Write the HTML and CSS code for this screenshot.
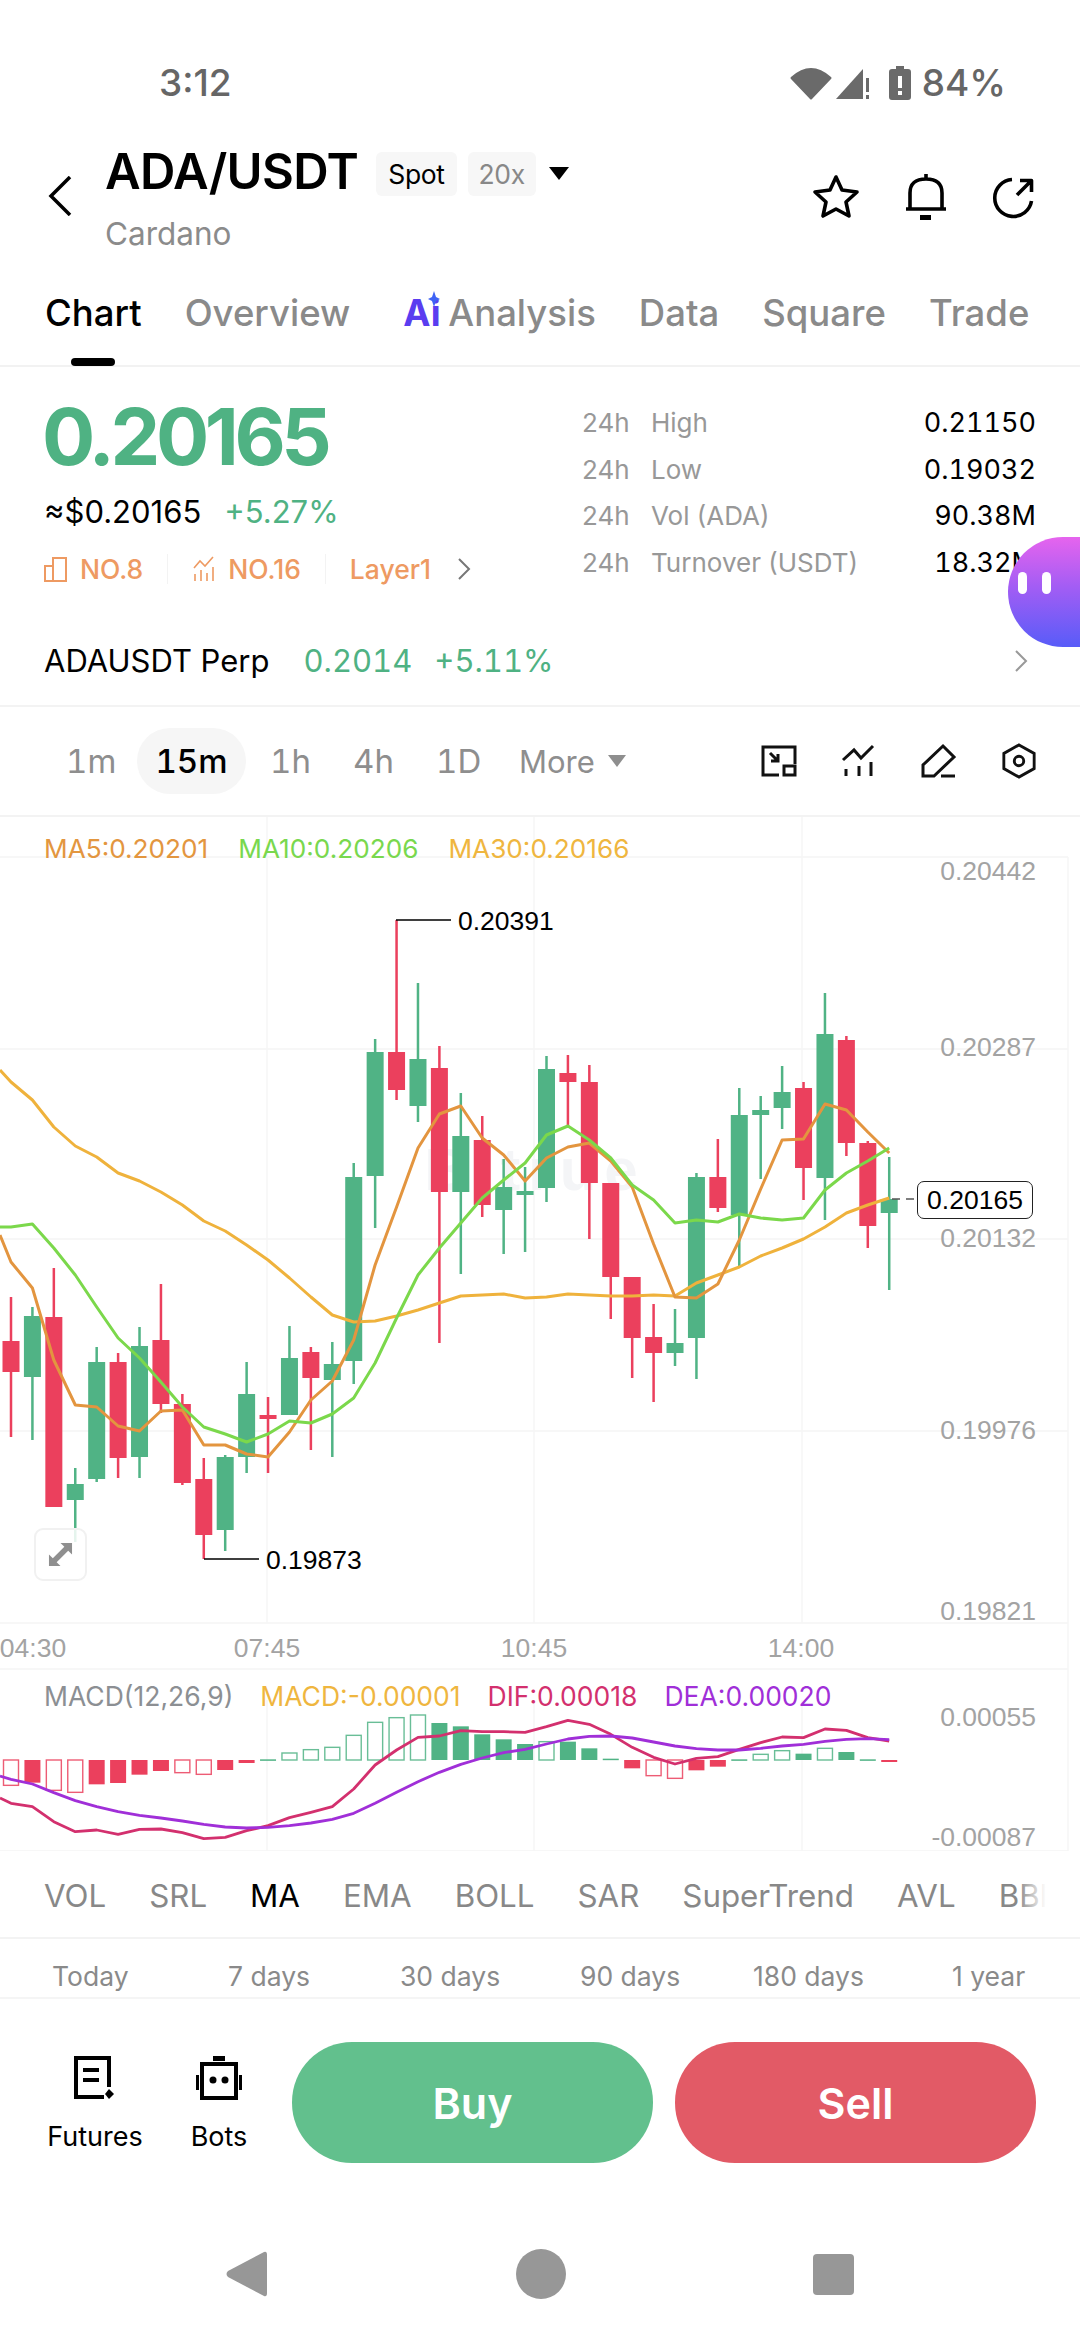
FILE: index.html
```html
<!DOCTYPE html>
<html>
<head>
    <meta charset="utf-8">
    <meta name="viewport" content="width=device-width, initial-scale=1">
    <title>ADA/USDT</title>
    <link rel="stylesheet" href="styles.css">
</head>
<body>
    <div class="status">
        <span class="clock">3:12</span>
        <div class="status-right">
            <svg class="ic-wifi" viewBox="0 0 42 34"><path d="M1 11Q21-7 41 11Q42 12 41 13L22 33Q21 34 20 33L1 13Q0 12 1 11Z"/></svg>
            <svg class="ic-signal" viewBox="0 0 34 34"><path d="M0 33L27 3V33Z"/><path d="M30 12h3v14h-3zM30 29h3v4h-3z"/></svg>
            <svg class="ic-battery" viewBox="0 0 22 34"><path d="M7 0h8v3h4q3 0 3 3v25q0 3-3 3H3q-3 0-3-3V6q0-3 3-3h4Z"/><path class="cut" d="M9 10h4v12H9zM9 25h4v4H9z"/></svg>
            <span class="percent">84%</span>
        </div>
    </div>

    <div class="header">
        <svg class="back" viewBox="0 0 24 40"><path d="M22 1L3 20L22 39"/></svg>
        <div class="title">
            <div class="title-top">
                <h1>ADA/USDT</h1>
                <span class="badge">Spot</span>
                <span class="badge muted">20x</span>
                <span class="caret"></span>
            </div>
            <p class="coin-name">Cardano</p>
        </div>
        <div class="header-icons">
            <svg class="star" viewBox="0 0 48 48"><path d="M24 4L30 17L45 19L34 29L37 43L24 36L11 43L14 29L3 19L18 17Z"/></svg>
            <svg viewBox="0 0 42 48"><path d="M5 36V20Q5 6 21 6Q37 6 37 20V36M1 36H41M21 1V6"/><path class="solid" d="M15 42h11v5H15z"/></svg>
            <svg viewBox="0 0 42 48"><path d="M20 6.5A18.5 18.5 0 1 0 39.5 28M25 22L39.5 7.5M28 7.5H39.5V19"/></svg>
        </div>
    </div>

    <div class="tabs">
        <span class="on">Chart</span>
        <span>Overview</span>
        <span class="ai-tab"><b class="ai">Ai<svg viewBox="0 0 12 16"><path d="M6 0L8 6L12 8L8 10L6 16L4 10L0 8L4 6Z"/></svg></b>Analysis</span>
        <span>Data</span>
        <span>Square</span>
        <span>Trade</span>
        <i class="tab-bar"></i>
    </div>

    <div class="summary">
        <div class="price-col">
            <div class="price">0.20165</div>
            <div class="price-sub"><span>≈$0.20165</span><span class="up">+5.27%</span></div>
            <div class="ranks">
                <svg viewBox="0 0 24 26"><path d="M1 10h8v15H1zM9 2h13v23H9z"/></svg>
                <span class="rank-a">NO.8</span>
                <i class="rank-sep"></i>
                <svg class="small" viewBox="0 0 24 26"><path d="M2 12L8 5L13 10L21 1M3 25V18M9 25V14M15 25V17M21 25V11"/></svg>
                <span class="rank-b">NO.16</span>
                <i class="rank-sep"></i>
                <span class="rank-c">Layer1</span>
                <svg class="chev" viewBox="0 0 14 24"><path d="M2 2L12 12L2 22"/></svg>
            </div>
        </div>
        <div class="stats">
            <div class="stat"><span class="h">24h</span><span class="k">High</span><span class="v">0.21150</span></div>
            <div class="stat"><span class="h">24h</span><span class="k">Low</span><span class="v">0.19032</span></div>
            <div class="stat"><span class="h">24h</span><span class="k">Vol (ADA)</span><span class="v">90.38M</span></div>
            <div class="stat"><span class="h">24h</span><span class="k">Turnover (USDT)</span><span class="v">18.32M</span></div>
        </div>
        <div class="bubble"><i></i><i></i></div>
    </div>

    <div class="perp">
        <span class="perp-name">ADAUSDT Perp</span>
        <span class="up perp-price">0.2014</span>
        <span class="up perp-pct">+5.11%</span>
        <svg class="perp-chev" viewBox="0 0 14 24"><path d="M2 2L12 12L2 22"/></svg>
    </div>

    <div class="frames">
        <span class="f1">1m</span>
        <span class="f15">15m</span>
        <span class="f2 first">1h</span>
        <span class="f2">4h</span>
        <span class="f2">1D</span>
        <span class="more">More<i></i></span>
        <div class="tools">
            <svg viewBox="0 -2 36 36"><path d="M18 30H2V2H34V19M9 8L17 16M17 9V16H10"/><path d="M23 21H34V30H23Z"/></svg>
            <svg viewBox="-2 -2 36 36"><path d="M0 15L11 5L18 13L30 1M3 24V31M16 21V31M28 17V31"/></svg>
            <svg viewBox="-1 -2 36 36"><path d="M21 1L32 12L12 31H1V20ZM19 31H33"/></svg>
            <svg viewBox="0 0 36 38"><path d="M18 2L34 11V27L18 36L2 27V11Z"/><circle cx="18" cy="19" r="5"/></svg>
        </div>
    </div>

    <div class="chart">
        <svg id="plot" viewBox="0 817 1080 1034">
            <g class="grid">
                <path d="M0 857H1068M0 1049H1068M0 1239H1068M0 1431H1068M0 1623H1068M0 1669H1068M0 1851H1068"/>
                <path d="M267 817V1623M534 817V1623M802 817V1623M1068 857V1851M267 1700V1851M534 1700V1851M802 1700V1851"/>
            </g>
            <text class="wm" x="535" y="1190" text-anchor="middle">Bitrue</text>
            <g id="macd"></g>
            <g id="candles"></g>
            <g id="lines"></g>
            <path class="note" d="M396 920H451M204 1559H259"/>
            <path class="dash" d="M892 1199H917"/>
            <text class="note-t" x="458" y="930">0.20391</text>
            <text class="note-t" x="266" y="1569">0.19873</text>
            <g class="axis">
                <text x="1036" y="880">0.20442</text>
                <text x="1036" y="1056">0.20287</text>
                <text x="1036" y="1247">0.20132</text>
                <text x="1036" y="1439">0.19976</text>
                <text x="1036" y="1620">0.19821</text>
                <text x="1036" y="1726">0.00055</text>
                <text x="1036" y="1846">-0.00087</text>
            </g>
            <g class="times">
                <text x="33" y="1657">04:30</text>
                <text x="267" y="1657">07:45</text>
                <text x="534" y="1657">10:45</text>
                <text x="801" y="1657">14:00</text>
            </g>
        </svg>
        <div class="legend">
            <span class="c-ma5">MA5:0.20201</span>
            <span class="c-ma10">MA10:0.20206</span>
            <span class="c-ma30">MA30:0.20166</span>
        </div>
        <div class="now">0.20165</div>
        <div class="expand">
            <svg viewBox="0 0 26 26"><path d="M1 25V13L5 17L17 5L13 1H25V13L21 9L9 21L13 25Z"/></svg>
        </div>
        <div class="legend macd-legend">
            <span class="c-gray">MACD(12,26,9)</span>
            <span class="c-ma30">MACD:-0.00001</span>
            <span class="c-dif">DIF:0.00018</span>
            <span class="c-dea">DEA:0.00020</span>
        </div>
    </div>

    <div class="indicators">
        <span>VOL</span><span>SRL</span><span class="on">MA</span><span>EMA</span><span>BOLL</span><span>SAR</span><span>SuperTrend</span><span>AVL</span><span>BBI</span>
    </div>

    <div class="ranges">
        <span>Today</span><span>7 days</span><span>30 days</span><span>90 days</span><span>180 days</span><span>1 year</span>
    </div>

    <div class="actions">
        <div class="action">
            <svg viewBox="0 0 44 44"><path class="ln" d="M36 31V2H3V41H31M10 14H26M10 24H26"/><path class="solid" d="M36 33L41 38L36 43L32 38Z"/></svg>
            <span>Futures</span>
        </div>
        <div class="action bots">
            <svg viewBox="0 0 46 44"><path class="ln" d="M6 8H40V42H6Z"/><path class="solid" d="M17 0H29V5H17ZM0 19H3V34H0ZM43 19H46V34H43Z"/><circle class="solid" cx="17" cy="24" r="3.5"/><circle class="solid" cx="29" cy="24" r="3.5"/></svg>
            <span>Bots</span>
        </div>
        <button class="trade buy">Buy</button>
        <button class="trade sell">Sell</button>
    </div>

    <div class="nav">
        <svg class="nav-back" viewBox="0 0 42 46"><path d="M38 1Q41 0 41 4V42Q41 46 38 45L2 26Q-1 23 2 20Z"/></svg>
        <i class="nav-home"></i>
        <i class="nav-square"></i>
    </div>

    <script src="chart.js"></script>
</body>
</html>
```

FILE: styles.css
```css
* {
    margin: 0;
    padding: 0;
    box-sizing: border-box;
    font-family: 'Inter', 'Liberation Sans', sans-serif;
}
body {
    width: 1080px;
    height: 2340px;
    background: #fff;
    color: #000;
    overflow: hidden;
    position: relative;
}
svg {
    display: block;
    flex: none;
}
i {
    display: block;
    font-style: normal;
}

/* status bar */
.status {
    height: 130px;
    padding: 60px 74px 0 159px;
    display: flex;
    justify-content: space-between;
    align-items: flex-start;
    color: #666;
    font-family: 'Roboto', sans-serif;
    font-size: 37px;
    font-weight: 500;
    line-height: 46px;
}
.status-right {
    display: flex;
    align-items: center;
    height: 46px;
}
.status-right svg {
    fill: #6a6a6a;
}
.ic-wifi {
    width: 42px;
    height: 34px;
}
.ic-signal {
    width: 34px;
    height: 34px;
    margin-left: 4px;
}
.ic-battery {
    width: 22px;
    height: 34px;
    margin-left: 19px;
}
.ic-battery .cut {
    fill: #fff;
}
.percent {
    margin-left: 11px;
}

/* title */
.header {
    height: 140px;
    display: flex;
    align-items: flex-start;
    padding-left: 48px;
    position: relative;
}
.back {
    width: 24px;
    height: 40px;
    margin-top: 46px;
    fill: none;
    stroke: #000;
    stroke-width: 3.5;
}
.title {
    margin-left: 33px;
}
.title-top {
    display: flex;
    align-items: flex-start;
    height: 68px;
}
.title h1 {
    font-size: 49px;
    font-weight: 600;
    line-height: 84px;
    letter-spacing: -0.6px;
}
.badge {
    height: 44px;
    margin: 22px 0 0 18px;
    padding: 0 12px;
    background: #f7f7f7;
    border-radius: 6px;
    font-size: 26.5px;
    line-height: 44px;
    letter-spacing: -0.4px;
}
.badge.muted {
    margin-left: 11px;
    padding: 0 11px;
    color: #888;
}
.caret {
    width: 0;
    height: 0;
    margin: 37px 0 0 13px;
    border-left: 10px solid transparent;
    border-right: 10px solid transparent;
    border-top: 13px solid #000;
}
.coin-name {
    margin-top: 18px;
    font-size: 31.5px;
    line-height: 36px;
    color: #8b8b8b;
}
.header-icons {
    position: absolute;
    right: 46px;
    top: 43px;
    display: flex;
    gap: 45px;
}
.header-icons svg {
    width: 42px;
    height: 48px;
    fill: none;
    stroke: #000;
    stroke-width: 3.6;
    stroke-linejoin: round;
}
.header-icons .star {
    width: 48px;
}
.header-icons .solid {
    fill: #000;
    stroke: none;
}

/* tabs */
.tabs {
    height: 97px;
    padding: 20px 0 0 45px;
    display: flex;
    gap: 43px;
    position: relative;
    border-bottom: 2px solid #f2f2f2;
    font-size: 36.5px;
    font-weight: 500;
    line-height: 46px;
    color: #8a8a8a;
}
.tabs .on {
    color: #000;
}
.ai-tab {
    display: flex;
    margin-left: 10px;
}
.ai {
    position: relative;
    width: 45px;
    font-weight: 700;
    color: #5a3df0;
}
.ai svg {
    position: absolute;
    top: 1px;
    left: 25px;
    width: 12px;
    height: 16px;
    fill: #3f63f5;
}
.tab-bar {
    position: absolute;
    left: 71px;
    bottom: -1px;
    width: 44px;
    height: 8px;
    border-radius: 4px;
    background: #000;
}

/* price block */
.summary {
    height: 243px;
    padding: 0 44px;
    display: flex;
    justify-content: space-between;
    position: relative;
}
.price {
    margin: 24px 0 0 -2px;
    font-size: 79px;
    font-weight: 700;
    line-height: 90px;
    letter-spacing: -4.4px;
    color: #4fb283;
}
.price-sub {
    display: flex;
    gap: 23px;
    margin-top: 11px;
    font-size: 31px;
    line-height: 40px;
}
.up {
    color: #4fb283;
}
.ranks {
    display: flex;
    align-items: center;
    margin-top: 19px;
    height: 36px;
    font-size: 26.5px;
    font-weight: 500;
    color: #ee9a62;
}
.ranks svg {
    width: 24px;
    height: 26px;
    fill: none;
    stroke: #ee9a62;
    stroke-width: 2;
}
.ranks svg.small {
    stroke-width: 1.6;
}
.ranks .chev {
    width: 14px;
    height: 24px;
    margin-left: 26px;
    stroke: #777;
}
.rank-a {
    margin-left: 12px;
}
.rank-b {
    margin-left: 12px;
}
.rank-sep {
    width: 1px;
    height: 30px;
    margin: 0 24px;
    background: #f3f3f3;
}
.stats {
    margin-top: 41px;
    width: 454px;
    flex: none;
}
.stat {
    display: flex;
    height: 46.7px;
    line-height: 30px;
    font-size: 26px;
    color: #989898;
}
.stat .h {
    width: 69px;
}
.stat .v {
    margin-left: auto;
    font-size: 27px;
    font-variant-numeric: tabular-nums;
    color: #000;
}
.bubble {
    position: absolute;
    right: 0;
    top: 170px;
    width: 72px;
    height: 110px;
    border-radius: 55px 0 0 55px / 55px 0 0 55px;
    background: linear-gradient(180deg, #e664ee, #a35df4 45%, #585cf8);
    display: flex;
    gap: 15px;
    padding: 35px 0 0 10px;
    z-index: 2;
}
.bubble i {
    width: 9px;
    height: 22px;
    border-radius: 5px;
    background: #fff;
}

/* perp row */
.perp {
    height: 97px;
    padding: 6px 52px 0 44px;
    display: flex;
    align-items: center;
    border-bottom: 2px solid #f3f3f3;
    font-size: 31px;
}
.perp-price {
    margin-left: 34px;
    font-variant-numeric: tabular-nums;
}
.perp-pct {
    margin-left: 22px;
    font-variant-numeric: tabular-nums;
}
.perp-chev {
    margin-left: auto;
    width: 14px;
    height: 24px;
    fill: none;
    stroke: #999;
    stroke-width: 2;
}

/* timeframes */
.frames {
    height: 110px;
    display: flex;
    align-items: center;
    position: relative;
    font-size: 33px;
    font-variant-numeric: tabular-nums;
    color: #8e8e8e;
    border-bottom: 2px solid #f3f3f3;
}
.f1 {
    width: 71px;
    margin-left: 66px;
}
.f15 {
    width: 109px;
    height: 66px;
    border-radius: 33px;
    background: #f6f6f6;
    color: #000;
    font-weight: 500;
    text-align: center;
    line-height: 66px;
}
.f2 {
    width: 83px;
}
.f2.first {
    margin-left: 24px;
}
.more {
    display: flex;
    align-items: center;
    gap: 13px;
    font-size: 31px;
}
.more i {
    width: 0;
    height: 0;
    border-left: 9px solid transparent;
    border-right: 9px solid transparent;
    border-top: 12px solid #8e8e8e;
}
.tools {
    position: absolute;
    right: 43px;
    top: 36px;
    display: flex;
    gap: 44px;
}
.tools svg {
    width: 36px;
    height: 36px;
    fill: none;
    stroke: #111;
    stroke-width: 3;
}

/* chart */
.chart {
    height: 1034px;
    position: relative;
}
#plot {
    position: absolute;
    inset: 0;
    width: 1080px;
    height: 1034px;
}
.grid path {
    stroke: #f5f5f5;
    stroke-width: 1.4;
    fill: none;
}
#plot text {
    font-family: 'Liberation Sans', sans-serif;
    font-size: 26.5px;
}
#plot .wm {
    font-size: 60px;
    font-weight: 700;
    letter-spacing: 8px;
    fill: #f4f5f7;
}
.note {
    stroke: #000;
    stroke-width: 1.5;
    fill: none;
}
.dash {
    stroke: #555;
    stroke-width: 1.5;
    stroke-dasharray: 8 6;
}
.axis text {
    fill: #a3a3a3;
    text-anchor: end;
}
.times text {
    fill: #a3a3a3;
    text-anchor: middle;
}
.legend {
    position: absolute;
    left: 44px;
    top: 16px;
    display: flex;
    gap: 30px;
    font-family: 'Liberation Sans', sans-serif;
    font-size: 26.2px;
    line-height: 32px;
    white-space: nowrap;
}
.macd-legend {
    top: 863px;
    font-size: 26.5px;
    gap: 27px;
}
.c-ma5 { color: #e3963f; }
.c-ma10 { color: #79d84e; }
.c-ma30 { color: #efb63f; }
.c-gray { color: #8c8f93; }
.c-dif { color: #d3306e; }
.c-dea { color: #a02fd8; }
.now {
    position: absolute;
    left: 917px;
    top: 364px;
    width: 116px;
    height: 38px;
    border: 1.5px solid #222;
    border-radius: 7px;
    background: #fff;
    text-align: center;
    font-family: 'Liberation Sans', sans-serif;
    font-size: 26.5px;
    line-height: 36px;
}
.expand {
    position: absolute;
    left: 34px;
    top: 711px;
    width: 53px;
    height: 53px;
    border: 2px solid #f1f1f1;
    border-radius: 9px;
    background: rgba(255, 255, 255, 0.85);
    display: flex;
    align-items: center;
    justify-content: center;
}
.expand svg {
    width: 25px;
    height: 25px;
    fill: #8f8f8f;
}

/* indicator and range rows */
.indicators {
    height: 88px;
    padding: 25px 0 0 44px;
    display: flex;
    gap: 43px;
    position: relative;
    overflow: hidden;
    white-space: nowrap;
    font-size: 31.3px;
    line-height: 40px;
    color: #888;
    border-bottom: 2px solid #f3f3f3;
}
.indicators .on {
    color: #000;
}
.indicators::after {
    content: "";
    position: absolute;
    left: 1018px;
    top: 0;
    width: 62px;
    height: 80px;
    background: linear-gradient(90deg, rgba(255, 255, 255, 0), #fff 45%);
}
.ranges {
    height: 60px;
    padding: 16px 0 0 52px;
    display: grid;
    grid-template-columns: 176px 172px 180px 173px 199px auto;
    align-items: center;
    font-size: 26.5px;
    color: #8a8a8a;
    border-bottom: 2px solid #f5f5f5;
}

/* bottom actions */
.actions {
    height: 201px;
    padding: 43px 44px 0 0;
    display: flex;
    align-items: flex-start;
    position: relative;
}
.action {
    width: 100px;
    margin-left: 45px;
    display: flex;
    flex-direction: column;
    align-items: center;
    font-size: 27px;
    line-height: 32px;
    flex: none;
}
.action svg {
    width: 44px;
    height: 44px;
    margin: 14px 0 21px;
}
.action.bots {
    width: 80px;
    margin-left: 34px;
}
.action.bots svg {
    width: 46px;
}
.ln {
    fill: none;
    stroke: #000;
    stroke-width: 4;
}
.solid {
    fill: #000;
}
.trade {
    width: 361px;
    height: 121px;
    border: 0;
    border-radius: 60px;
    color: #fff;
    font-size: 43px;
    font-weight: 600;
}
.buy {
    margin-left: 33px;
    background: #62c08d;
}
.sell {
    margin-left: 22px;
    background: #e25a66;
}

/* navigation bar */
.nav {
    display: flex;
    align-items: center;
    height: 50px;
    margin-top: 49px;
    padding-left: 226px;
}
.nav-back {
    width: 42px;
    height: 46px;
    fill: #979797;
}
.nav-home {
    width: 50px;
    height: 50px;
    margin-left: 248px;
    border-radius: 50%;
    background: #979797;
}
.nav-square {
    width: 41px;
    height: 41px;
    margin-left: 247px;
    border-radius: 4px;
    background: #979797;
}
```

FILE: chart.js
```js
const GREEN = "#50b385";
const RED = "#eb405d";
const NS = "http://www.w3.org/2000/svg";

const STEP = 21.42;
const cx = (i) => 11 + STEP * i;

// [high, open/close top, open/close bottom, low, colour]
const candles = [
    [1297, 1341, 1372, 1437, RED], [1307, 1316, 1377, 1440, GREEN], [1268, 1317, 1507, 1507, RED],
    [1468, 1484, 1500, 1542, GREEN], [1347, 1362, 1479, 1482, GREEN], [1353, 1362, 1458, 1478, RED],
    [1327, 1346, 1457, 1478, GREEN], [1284, 1340, 1404, 1413, RED], [1394, 1404, 1483, 1485, RED],
    [1458, 1479, 1535, 1559, RED], [1455, 1457, 1530, 1551, GREEN], [1362, 1394, 1457, 1473, GREEN],
    [1397, 1415, 1417, 1473, RED], [1326, 1358, 1415, 1415, GREEN], [1347, 1352, 1378, 1450, RED],
    [1342, 1364, 1380, 1457, GREEN], [1163, 1177, 1361, 1384, GREEN], [1039, 1052, 1176, 1228, GREEN],
    [920, 1052, 1090, 1100, RED], [983, 1059, 1106, 1122, GREEN], [1046, 1068, 1192, 1343, RED],
    [1093, 1136, 1192, 1274, GREEN], [1116, 1140, 1205, 1217, RED], [1159, 1187, 1210, 1254, GREEN],
    [1167, 1191, 1192, 1252, GREEN], [1056, 1069, 1188, 1202, GREEN], [1055, 1073, 1082, 1127, RED],
    [1065, 1082, 1183, 1239, RED], [1183, 1183, 1277, 1319, RED], [1277, 1277, 1338, 1378, RED],
    [1304, 1337, 1353, 1402, RED], [1309, 1343, 1353, 1366, GREEN], [1173, 1177, 1338, 1379, GREEN],
    [1139, 1177, 1208, 1212, RED], [1088, 1115, 1215, 1267, GREEN], [1096, 1110, 1115, 1179, GREEN],
    [1066, 1092, 1108, 1129, GREEN], [1082, 1088, 1168, 1200, RED], [993, 1034, 1178, 1220, GREEN],
    [1036, 1040, 1143, 1156, RED], [1141, 1143, 1226, 1248, RED], [1157, 1199, 1213, 1290, GREEN]
];

const ma30 = [1082, 1100, 1127, 1146, 1157, 1173, 1181, 1192, 1205, 1221, 1231, 1245, 1260, 1278, 1297, 1315, 1322, 1321, 1316, 1310, 1303, 1296, 1295, 1294, 1298, 1297, 1294, 1295, 1296, 1296, 1295, 1296, 1283, 1275, 1267, 1256, 1248, 1239, 1227, 1213, 1205, 1198];
const ma5 = [1262, 1288, 1360, 1405, 1407, 1426, 1431, 1411, 1410, 1445, 1445, 1454, 1457, 1432, 1400, 1381, 1340, 1265, 1207, 1148, 1114, 1106, 1138, 1155, 1181, 1158, 1147, 1143, 1161, 1187, 1244, 1297, 1298, 1284, 1240, 1189, 1140, 1139, 1104, 1110, 1132, 1153];
const ma10 = [1227, 1224, 1248, 1275, 1307, 1338, 1358, 1382, 1407, 1427, 1434, 1442, 1434, 1421, 1423, 1414, 1398, 1363, 1318, 1275, 1248, 1223, 1198, 1180, 1163, 1135, 1126, 1140, 1158, 1185, 1200, 1223, 1220, 1222, 1214, 1218, 1220, 1218, 1190, 1173, 1161, 1148];

// MACD values are read off a picture scaled 3x from y = 1640
const dif = [490, 500, 545, 575, 570, 583, 568, 567, 578, 596, 592, 572, 557, 533, 517, 500, 447, 375, 330, 292, 288, 272, 275, 275, 277, 260, 241, 253, 283, 322, 352, 372, 355, 350, 328, 308, 291, 293, 267, 271, 293, 303];
const dea = [418, 432, 458, 482, 500, 515, 526, 534, 543, 553, 561, 564, 562, 557, 549, 538, 520, 490, 457, 425, 397, 373, 354, 338, 328, 312, 297, 289, 288, 294, 306, 318, 326, 330, 330, 325, 318, 313, 304, 298, 296, 299];

// [bar end, hollow]
const bars = [
    [436, 1], [428, 0], [451, 1], [457, 1], [433, 0], [429, 0], [404, 0], [393, 0], [398, 1], [403, 1], [390, 0], [369, 0],
    [358, 0], [339, 1], [329, 1], [322, 1], [286, 1], [247, 1], [233, 1], [225, 1], [249, 0], [259, 0], [283, 0], [298, 0],
    [312, 0], [305, 1], [305, 0], [325, 0], [356, 0], [385, 0], [407, 1], [415, 1], [391, 0], [380, 0], [358, 0], [343, 1],
    [332, 1], [341, 0], [325, 1], [336, 0], [358, 0], [366, 0]
];

function el(parent, name, attrs) {
    const node = document.createElementNS(NS, name);
    Object.keys(attrs).forEach((k) => node.setAttribute(k, attrs[k]));
    parent.appendChild(node);
    return node;
}

function drawLine(parent, ys, colour, width, startY) {
    const pts = ys.map((y, i) => cx(i).toFixed(1) + "," + y);
    pts.unshift("0," + startY);
    el(parent, "polyline", { points: pts.join(" "), fill: "none", stroke: colour, "stroke-width": width, "stroke-linejoin": "round" });
}

const candleGroup = document.getElementById("candles");
candles.forEach((c, i) => {
    const x = cx(i);
    el(candleGroup, "rect", { x: x - 1.25, y: c[0], width: 2.5, height: c[3] - c[0], fill: c[4] });
    el(candleGroup, "rect", { x: x - 8.5, y: c[1], width: 17, height: Math.max(c[2] - c[1], 4), fill: c[4] });
});

const lineGroup = document.getElementById("lines");
drawLine(lineGroup, ma30, "#efb23c", 3, 1070);
drawLine(lineGroup, ma5, "#e3953f", 3, 1235);
drawLine(lineGroup, ma10, "#7bd84b", 3, 1227);

const macdGroup = document.getElementById("macd");
const BASE = 1760;
bars.forEach((b, i) => {
    const end = 1640 + b[0] / 3;
    const colour = end > BASE ? RED : GREEN;
    const top = Math.min(end, BASE);
    const h = Math.max(Math.abs(end - BASE), 1.5);
    if (b[1]) {
        el(macdGroup, "rect", { x: cx(i) - 7.5, y: top, width: 15, height: h, fill: "#fff", stroke: colour, "stroke-width": 1.4, opacity: 0.85 });
    } else {
        el(macdGroup, "rect", { x: cx(i) - 8, y: top, width: 16, height: h, fill: colour });
    }
});
drawLine(macdGroup, dif.map((v) => 1640 + v / 3), "#d3306e", 2.8, 1798);
drawLine(macdGroup, dea.map((v) => 1640 + v / 3), "#a02fd8", 2.8, 1776);
```
